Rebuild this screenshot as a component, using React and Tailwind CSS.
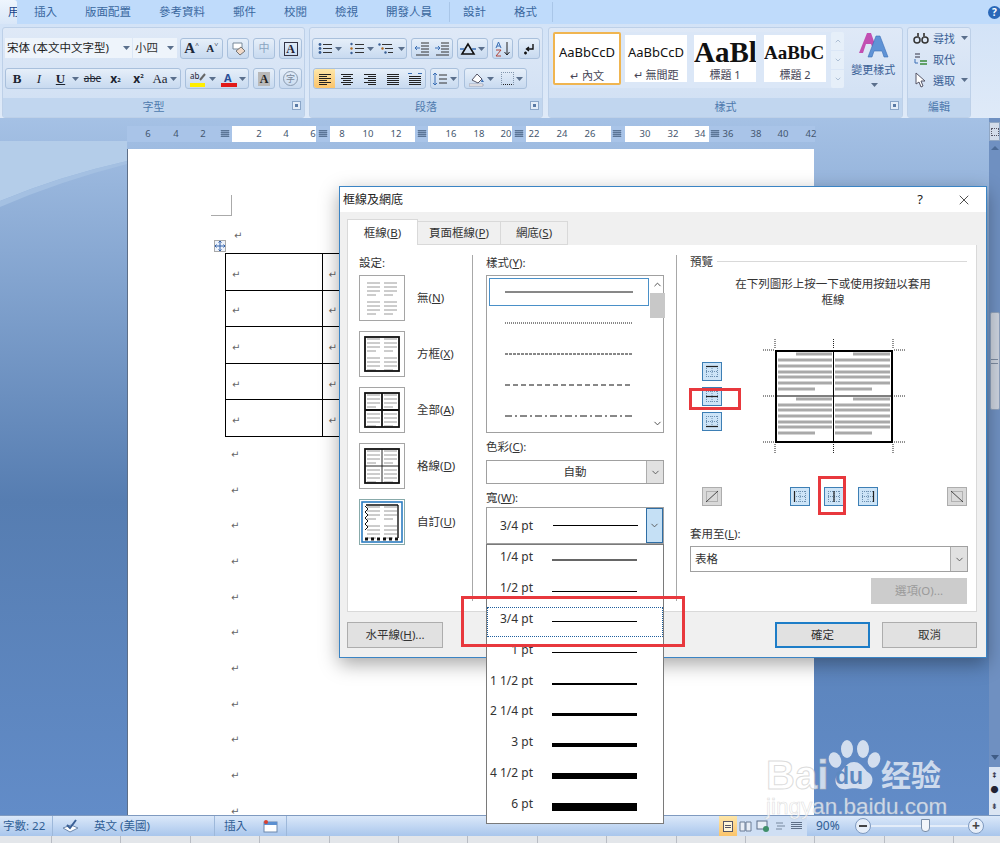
import React from "react";
import { ChevronDown, ChevronUp, X } from "lucide-react";

const Caret = () => (
  <svg className="w-[7px] h-[4px] ml-[2px] shrink-0" viewBox="0 0 7 4">
    <path d="M0 0h7L3.5 4z" fill="#5a6f8c" />
  </svg>
);

const Ico = ({ children, w = 16, h = 16 }) => (
  <svg width={w} height={h} viewBox={`0 0 ${w} ${h}`} className="shrink-0">
    {children}
  </svg>
);

const Lines = ({ rows, color = "#222", w = 16 }) => (
  <Ico w={w}>
    {rows.map(([a, b, y], i) => (
      <path key={i} d={`M${a} ${y + 0.5}H${b}`} stroke={color} />
    ))}
  </Ico>
);

const Cluster = ({ className, children }) => (
  <div className={`flex h-[21px] items-center rounded-[3px] border border-[#a9c0dc] bg-gradient-to-b from-[#e6eff9] to-[#c8daf0] ${className}`}>
    {children}
  </div>
);

const Cell = ({ className, children }) => (
  <div className={`flex h-full items-center justify-center ${className}`}>{children}</div>
);

const tabs = ["插入", "版面配置", "參考資料", "郵件", "校閱", "檢視", "開發人員"];

function Tabs() {
  return (
    <div className="flex h-[24px] items-center bg-[#bfdbfb] text-[11.5px] text-[#3a689f]">
      <div className="flex h-full w-[17px] items-center justify-end rounded-tr-[3px] bg-gradient-to-b from-[#eef5fd] to-[#d9e7f8] text-[#15428b]">
        <span className="w-[9px] overflow-hidden">用</span>
      </div>
      <div className="flex pl-[3px]">
        {tabs.map((t) => (
          <span key={t} className="px-[14px]">{t}</span>
        ))}
      </div>
      <div className="ml-[3px] h-[20px] w-px bg-[#a9c6e8]" />
      <span className="px-[13px]">設計</span>
      <span className="px-[15px]">格式</span>
      <div className="h-[20px] w-px bg-[#a9c6e8]" />
      <div className="ml-auto mr-[-1px] flex h-[13px] w-[13px] items-center justify-center rounded-full bg-[#2a68b8] text-[10px] font-bold text-white">?</div>
    </div>
  );
}

const Group = ({ className, title, launcher, children }) => (
  <div className={`flex h-[91px] shrink-0 flex-col overflow-hidden rounded-[3px] border border-[#bdd0e8] bg-gradient-to-b from-[#dfe9f7] to-[#cfdff3] ${className}`}>
    <div className="flex-1">{children}</div>
    <div className="relative flex h-[19px] items-center justify-center bg-[#c1d6ef] text-[11px] text-[#4d79ad]">
      {title}
      {launcher && (
        <div className="absolute right-[3px] top-[3px] flex h-[9px] w-[9px] items-center justify-center border border-[#8ba6c8] bg-[#e4edf8]">
          <div className="h-[3px] w-[3px] bg-[#5a7aa5]" />
        </div>
      )}
    </div>
  </div>
);

function FontGroup() {
  return (
    <Group className="ml-[2px] w-[303px]" title="字型" launcher>
      <div className="flex pl-[2px] pt-[10px]">
        <div className="flex h-[20px] w-[127px] items-center justify-between bg-[#eef4fb] px-[2px] text-[11.5px] text-[#222]">
          <span>宋体 (本文中文字型)</span>
          <Caret />
        </div>
        <div className="ml-px flex h-[20px] w-[44px] items-center justify-between bg-[#eef4fb] pl-[2px] pr-[3px] text-[11.5px] text-[#333]">
          <span>小四</span>
          <Caret />
        </div>
        <Cluster className="ml-[3px] w-[43px] font-['Liberation_Serif',serif] font-bold text-[#1d2a3c]">
          <Cell className="w-[22px] text-[15px]">A<sup className="text-[7px]">^</sup></Cell>
          <Cell className="w-[20px] text-[11px]">A<sup className="text-[7px]">˅</sup></Cell>
        </Cluster>
        <Cluster className="ml-[4px] w-[22px] justify-center">
          <Ico>
            <path d="M3 2h9v6H3z" fill="#fff" stroke="#789" />
            <path d="M6 10l5-4 4 4-5 4z" fill="#f0d9c8" stroke="#777" />
          </Ico>
        </Cluster>
        <Cluster className="ml-[4px] w-[22px] justify-center text-[11px] text-[#8aa4c0]">中</Cluster>
        <Cluster className="ml-[4px] w-[23px] justify-center">
          <div className="flex h-[14px] w-[14px] items-center justify-center border border-[#334] font-['Liberation_Serif',serif] text-[12px] font-bold text-[#223]">A</div>
        </Cluster>
      </div>
      <div className="flex pl-[2px] pt-[9px]">
        <Cluster className="w-[176px] text-[#1c2430]">
          <Cell className="w-[22px] font-['Liberation_Serif',serif] text-[13px] font-bold">B</Cell>
          <Cell className="w-[22px] font-['Liberation_Serif',serif] text-[13px] italic">I</Cell>
          <Cell className="w-[31px] pl-[4px] font-['Liberation_Serif',serif] text-[13px] font-bold">
            <span className="underline">U</span>
            <span className="ml-[5px]"><Caret /></span>
          </Cell>
          <Cell className="w-[23px] text-[10px] line-through">abe</Cell>
          <Cell className="w-[23px] text-[12px] font-bold">x<sub className="text-[6px]">2</sub></Cell>
          <Cell className="w-[23px] text-[12px] font-bold">x<sup className="text-[6px]">2</sup></Cell>
          <Cell className="w-[29px] font-['Liberation_Serif',serif] text-[13px]">Aa<Caret /></Cell>
        </Cluster>
        <Cluster className="ml-[4px] w-[64px]">
          <Cell className="w-[32px]">
            <Ico w={18}>
              <text x="1" y="8" fontSize="8" fill="#223">ab</text>
              <path d="M11 9l5-6" stroke="#666" strokeWidth="2" />
              <path d="M1 12h15v4H1z" fill="#ffee00" />
            </Ico>
            <Caret />
          </Cell>
          <Cell className="w-[30px]">
            <Ico>
              <text x="3" y="11" fontSize="11" fontWeight="700" fill="#2a4f96">A</text>
              <path d="M0 12h16v4H0z" fill="#e21a1a" />
            </Ico>
            <Caret />
          </Cell>
        </Cluster>
        <Cluster className="ml-[4px] w-[22px] justify-center">
          <div className="bg-[#b9b9b9] px-[2px] font-['Liberation_Serif',serif] text-[12px] font-bold leading-[14px] text-[#222]">A</div>
        </Cluster>
        <Cluster className="ml-[4px] w-[23px] justify-center">
          <div className="flex h-[15px] w-[15px] items-center justify-center rounded-full border border-[#8a9bb0] text-[9px] text-[#7a8a9c]">字</div>
        </Cluster>
      </div>
    </Group>
  );
}

const bullet = [[6, 15, 3], [6, 15, 7], [6, 15, 11]];
const left = [[2, 14, 3], [2, 10, 5], [2, 14, 7], [2, 10, 9], [2, 14, 11], [2, 10, 13]];
const center = [[2, 14, 3], [4, 12, 5], [2, 14, 7], [4, 12, 9], [2, 14, 11], [4, 12, 13]];
const right = [[2, 14, 3], [6, 14, 5], [2, 14, 7], [6, 14, 9], [2, 14, 11], [6, 14, 13]];
const just = [[2, 14, 3], [2, 14, 5], [2, 14, 7], [2, 14, 9], [2, 14, 11], [2, 14, 13]];

function ParaGroup() {
  return (
    <Group className="ml-[4px] w-[234px]" title="段落" launcher>
      <div className="flex pl-[2px] pt-[10px]">
        <Cluster className="w-[95px]">
          <Cell className="w-[32px]">
            <Ico>
              <circle cx="3" cy="3.5" r="1.4" fill="#3a5f95" />
              <circle cx="3" cy="7.5" r="1.4" fill="#3a5f95" />
              <circle cx="3" cy="11.5" r="1.4" fill="#3a5f95" />
              {bullet.map(([a, b, y]) => <path key={y} d={`M${a} ${y + 0.5}H${b}`} stroke="#333" />)}
            </Ico>
            <Caret />
          </Cell>
          <Cell className="w-[32px]">
            <Ico>
              <circle cx="2.500" cy="3" r="1.200" fill="#3a5f95" />
              <circle cx="2.500" cy="7.500" r="1.200" fill="#b06a20" />
              <circle cx="2.500" cy="12" r="1.200" fill="#3a5f95" />
              {bullet.map(([a, b, y]) => <path key={y} d={`M${a} ${y + 0.5}H${b}`} stroke="#333" />)}
            </Ico>
            <Caret />
          </Cell>
          <Cell className="w-[29px]">
            <Ico w={18}>
              <path d="M4 3.500h10M7 7.500h8M10 11.500h5" stroke="#333" />
              <circle cx="1.500" cy="3.500" r="1.200" fill="#3a5f95" />
              <circle cx="4.500" cy="7.500" r="1.200" fill="#b06a20" />
              <circle cx="7.500" cy="11.500" r="1.200" fill="#3a5f95" />
            </Ico>
            <Caret />
          </Cell>
        </Cluster>
        <Cluster className="ml-[4px] w-[42px]">
          <Cell className="w-[21px]">
            <Ico>
              <path d="M7 2h8M7 5h8M7 8h8M7 11h8M2 14h13" stroke="#333" />
              <path d="M6 7H1l2-2M1 7l2 2" stroke="#3a6fb5" fill="none" />
            </Ico>
          </Cell>
          <Cell className="w-[21px]">
            <Ico>
              <path d="M7 2h8M7 5h8M7 8h8M7 11h8M2 14h13" stroke="#333" />
              <path d="M1 7h5L4 5M6 7L4 9" stroke="#3a6fb5" fill="none" />
            </Ico>
          </Cell>
        </Cluster>
        <Cluster className="ml-[4px] w-[31px] justify-center">
          <Ico>
            <path d="M8 3L2 13h12z" fill="none" stroke="#111" strokeWidth="1.6" />
            <path d="M0 8h4M12 8h4" stroke="#3a6fb5" strokeWidth="1.5" />
          </Ico>
          <Caret />
        </Cluster>
        <Cluster className="ml-[4px] w-[21px] justify-center">
          <Ico>
            <path d="M1 7l2.500-6L6 7M2 5h3" stroke="#3a6fb5" fill="none" />
            <path d="M1 9h5l-5 6h5" stroke="#b0443a" fill="none" />
            <path d="M12 1v13M9.500 11l2.500 3 2.500-3" stroke="#222" fill="none" />
          </Ico>
        </Cluster>
        <Cluster className="ml-[5px] w-[22px] justify-center">
          <Ico>
            <path d="M12 3v5H6M8 6L5.500 8 8 10M3 12h3M4.500 10.500v3" stroke="#111" strokeWidth="1.4" fill="none" />
          </Ico>
        </Cluster>
      </div>
      <div className="flex pl-[3px] pt-[9px]">
        <Cluster className="w-[113px]">
          <Cell className="w-[21px] rounded-l-[3px] bg-gradient-to-b from-[#fde6a8] to-[#fbc46a]"><Lines rows={left} /></Cell>
          <Cell className="w-[23px]"><Lines rows={center} /></Cell>
          <Cell className="w-[23px]"><Lines rows={right} /></Cell>
          <Cell className="w-[23px]"><Lines rows={just} /></Cell>
          <Cell className="w-[21px]">
            <Ico>
              <path d="M1 2.500h4M11 2.500h4" stroke="#3a6fb5" />
              <path d="M2 5.500h12M2 7.500h12M2 9.500h12M2 11.500h12M2 13.500h12" stroke="#222" />
            </Ico>
          </Cell>
        </Cluster>
        <Cluster className="ml-[4px] w-[29px] justify-center">
          <Ico>
            <path d="M3 2v12M1 4l2-2 2 2M1 12l2 2 2-2" stroke="#3a6fb5" fill="none" />
            <path d="M7 4h8M7 8h8M7 12h8" stroke="#333" />
          </Ico>
          <Caret />
        </Cluster>
        <Cluster className="ml-[5px] w-[63px]">
          <Cell className="w-[34px]">
            <Ico>
              <path d="M3 9l5-6 5 5-4 4z" fill="#fff" stroke="#556" />
              <path d="M0 13h14v2H0z" fill="#fff" stroke="#889" strokeWidth=".6" />
              <path d="M13 8l2 3h-3z" fill="#3a6fb5" />
            </Ico>
            <Caret />
          </Cell>
          <Cell className="w-[28px]">
            <div className="h-[13px] w-[13px] border border-dotted border-[#8296ad] border-b-[#222]" />
            <Caret />
          </Cell>
        </Cluster>
      </div>
    </Group>
  );
}

const Style = ({ className, sample, label, active }) => (
  <div className={`flex shrink-0 flex-col items-center overflow-hidden bg-white ${active ? "h-[53px] w-[68px] rounded-[2px] border-2 border-[#f0b550] pt-[5px]" : "mt-[3px] h-[47px] w-[62px] pt-[4px]"}`}>
    <div className={`w-full overflow-hidden whitespace-nowrap text-center text-[#111] ${active ? "h-[29px]" : "h-[27px]"} ${className}`}>{sample}</div>
    <div className="mt-[2px] text-[11px] leading-[14px] text-[#445]">{label}</div>
  </div>
);

function StylesGroup() {
  return (
    <Group className="ml-[5px] w-[355px]" title="樣式" launcher>
      <div className="flex pl-[3px] pt-[4px]">
        <div className="flex h-[56px] w-[294px] rounded-[2px] bg-[#dbe7f7]">
          <div className="ml-[1px] flex">
            <Style active className="text-[13px] leading-[27px]" sample="AaBbCcD" label="↵ 內文" />
            <div className="w-[4px]" />
            <Style className="text-[13px] leading-[27px]" sample="AaBbCcD" label="↵ 無間距" />
            <div className="w-[7px]" />
            <Style className="text-left font-['Liberation_Serif',serif] text-[29px] font-bold leading-[27px]" sample="AaBl" label="標題 1" />
            <div className="w-[8px]" />
            <Style className="text-left font-['Liberation_Serif',serif] text-[19px] font-bold leading-[27px]" sample="AaBbC" label="標題 2" />
          </div>
          <div className="ml-[5px] flex w-[13px] flex-col gap-px text-[#8fa6c2]">
            <Cell className="flex-1 rounded-t-[2px] bg-[#e6eff9]"><ChevronUp size={8} /></Cell>
            <Cell className="flex-1 bg-[#e6eff9]"><ChevronDown size={8} /></Cell>
            <Cell className="flex-1 rounded-b-[2px] bg-[#e6eff9]"><ChevronDown size={8} /></Cell>
          </div>
        </div>
        <div className="flex w-[58px] flex-col items-center">
          <svg width="32" height="28" viewBox="0 0 32 28" className="mt-[-1px]">
            <path d="M2 22L10 2h4l5 14-3 2-2-5H9l-3 9z" fill="#c24fb2" />
            <path d="M11 26L19 5h4l8 21h-4l-2-6h-8l-2 6z" fill="#5f93d6" stroke="#3a6fb5" strokeWidth=".6" />
          </svg>
          <div className="mt-[4px] text-[11px] leading-[14px] text-[#3a5f95]">變更樣式</div>
          <div className="mt-[6px]"><Caret /></div>
        </div>
      </div>
    </Group>
  );
}

function EditGroup() {
  return (
    <Group className="ml-[4px] w-[64px]" title="編輯">
      <div className="flex flex-col gap-[5px] pl-[5px] pt-[2px] text-[11px] leading-[15px] text-[#3a5f95]">
        <div className="flex items-center gap-[4px]">
          <Ico>
            <circle cx="4" cy="10" r="3" fill="none" stroke="#333" strokeWidth="1.5" />
            <circle cx="12" cy="10" r="3" fill="none" stroke="#333" strokeWidth="1.5" />
            <path d="M4 3h2v5H4zM10 3h2v5h-2z" fill="#555" />
          </Ico>
          <span>尋找</span><Caret />
        </div>
        <div className="flex items-center gap-[4px]">
          <Ico>
            <path d="M2 3h5M2 6h5" stroke="#334" />
            <path d="M7 10h7M7 13h7" stroke="#3a8a3a" strokeWidth="1.500" />
            <path d="M2 8v4h3" stroke="#3a6fb5" fill="none" />
          </Ico>
          <span>取代</span>
        </div>
        <div className="flex items-center gap-[4px]">
          <Ico>
            <path d="M3 1v11l3-2 2 5 2-1-2-5h4z" fill="#fff" stroke="#556" />
          </Ico>
          <span>選取</span><Caret />
        </div>
      </div>
    </Group>
  );
}

const ticks = [
  [148, "6"], [176, "4"], [203, "2"], [259, "2"], [286, "4"], [313, "6"], [342, "8"], [368, "10"], [396, "12"],
  [451, "16"], [479, "18"], [506, "20"], [534, "22"], [562, "24"], [590, "26"], [645, "30"], [673, "32"], [700, "34"],
  [728, "36"], [756, "38"], [783, "40"], [811, "42"],
];
const rulerCells = [225, 323, 422, 519, 617, 715];

function Ruler() {
  return (
    <div className="relative ml-[127px] mt-[8px] flex h-[16px] w-[688px] text-[9.5px] leading-[16px] text-[#44566e]">
      <div className="w-[105px] bg-[#a9c4e8]" />
      <div className="w-[84px] bg-white" />
      <div className="w-[14px] bg-[#a9c4e8]" />
      <div className="w-[85px] bg-white" />
      <div className="w-[13px] bg-[#a9c4e8]" />
      <div className="w-[84px] bg-white" />
      <div className="w-[14px] bg-[#a9c4e8]" />
      <div className="w-[85px] bg-white" />
      <div className="w-[14px] bg-[#a9c4e8]" />
      <div className="w-[84px] bg-white" />
      <div className="flex-1 bg-[#a9c4e8]" />
      {ticks.map(([x, t]) => (
        <span key={x} className="absolute top-0 -translate-x-1/2" style={{ left: x - 127 }}>{t}</span>
      ))}
      {rulerCells.map((x) => (
        <svg key={x} width="9" height="8" viewBox="0 0 9 8" className="absolute top-[4px] -translate-x-1/2" style={{ left: x - 127 }}>
          <path d="M0 .5h9M0 2.500h9M0 4.500h9M0 6.500h9M1.500 0v7M3.500 0v7M5.500 0v7M7.500 0v7" stroke="#51698a" strokeWidth=".8" />
        </svg>
      ))}
    </div>
  );
}

const Mark = () => <span className="font-['DejaVu_Sans',sans-serif] text-[10px] leading-none text-[#666]">↵</span>;

function Page() {
  return (
    <div className="relative ml-[127px] mt-[7px] h-[666px] w-[687px] overflow-hidden border-l border-[#5c6e88] bg-white">
      <div className="ml-[83px] mt-[46px] h-[21px] w-[21px] border-b border-r border-[#aaa]" />
      <div className="ml-[106px] mt-[12px] flex h-[16px] items-center"><Mark /></div>
      <div className="absolute left-[86px] top-[91px] flex h-[12px] w-[12px] items-center justify-center border border-[#a9a9a9] bg-[#eef3fb]">
        <svg width="10" height="10" viewBox="0 0 10 10"><path d="M5 0v10M0 5h10M3.500 1.500L5 0l1.500 1.500M3.500 8.500L5 10l1.500-1.500M1.500 3.500L0 5l1.500 1.500M8.500 3.500L10 5 8.500 6.500" stroke="#2f5fa8" fill="none" /></svg>
      </div>
      <table className="ml-[97px] mt-[9px] w-[194px] table-fixed border-collapse">
        <tbody>
          {[0, 1, 2, 3, 4].map((r) => (
            <tr key={r} className="h-[36.600px]">
              <td className="border border-black pl-[6px] leading-none"><Mark /></td>
              <td className="border border-black pl-[6px] leading-none"><Mark /></td>
            </tr>
          ))}
        </tbody>
      </table>
      {[0, 1, 2, 3, 4, 5, 6, 7, 8, 9, 10].map((i) => (
        <div key={i} className="ml-[103px] flex h-[35.700px] items-center"><Mark /></div>
      ))}
    </div>
  );
}

function Scrollbar() {
  return (
    <div className="flex w-[11px] shrink-0 flex-col items-center bg-[#6f90c1]">
      <div className="mt-[4px] flex h-[19px] w-[11px] items-center justify-center border border-[#8fa6c4] bg-[#d3dcea]">
        <div className="h-[8px] w-[8px] border border-dotted border-[#556]" />
      </div>
      <div className="mt-[5px] border-x-[4px] border-b-[4px] border-x-transparent border-b-[#4b6a96]" />
      <div className="mt-[162px] flex h-[98px] w-[10px] items-center justify-center rounded-[2px] border border-[#8fa2bd] bg-[#ccd3de]">
        <div className="h-[5px] w-[7px] border-y border-[#7d8ba0]" />
      </div>
      <div className="mt-[345px] border-x-[4px] border-t-[5px] border-x-transparent border-t-[#3f5c86]" />
      <div className="mt-auto flex h-[48px] w-[11px] flex-col items-center justify-around bg-[#dbe5f3] pb-[1px] text-[8px] leading-none text-[#223]">
        <span>⇞</span>
        <span>●</span>
        <span>⇟</span>
      </div>
    </div>
  );
}

const Dots = ({ d }) => <path d={d} stroke="#222" strokeDasharray="1 1" />;

function Preview() {
  const rowsTop = [355, 361, 367, 373, 378, 384, 390];
  const rowsBot = [400, 406, 411, 417, 423, 428, 434];
  const Txt = ({ rows, x1, x2, x3, x4 }) =>
    rows.map((y, i) => (
      <path
        key={y}
        d={`M${i === 0 ? x3 : x1} ${y}H${i === rows.length - 1 ? x4 : x2}`}
        stroke="#a9a9a9"
        strokeWidth="3"
      />
    ));
  return (
    <svg width="150" height="120" viewBox="760 338 150 120" className="shrink-0">
      <Txt rows={rowsTop} x1={778} x2={832} x3={796} x4={815} />
      <Txt rows={rowsBot} x1={778} x2={832} x3={796} x4={815} />
      <Txt rows={rowsTop} x1={835} x2={890} x3={853} x4={872} />
      <Txt rows={rowsBot} x1={835} x2={890} x3={853} x4={872} />
      <rect x="776" y="352" width="116" height="91" fill="none" stroke="#000" strokeWidth="2" />
      <path d="M833.500 352v91M776 397h116" stroke="#000" />
      <Dots d="M775 340v10M833.500 340v10M893 340v10M775 445v10M833.500 445v10M893 445v10M763 351h12M763 397h12M763 443h12M894 351h12M894 397h12M894 443h12" />
    </svg>
  );
}

const BorderBtn = ({ d, gray }) => (
  <div className={`h-[19px] w-[20px] shrink-0 border ${gray ? "border-[#adadad] bg-[#d9d9d9]" : "border-[#3d7fb5] bg-[#cde4f7]"}`}>
    <svg width="18" height="17" viewBox="0 0 18 17">
      {!gray && <path d="M3.500 3v11M9 3v11M14.500 3v11M3 3.500h12M3 8.500h12M3 13.500h12" stroke="#6b8fb0" strokeDasharray="1 1" />}
      {gray && <rect x="3.500" y="3.500" width="11" height="10" fill="none" stroke="#888" strokeDasharray="1 1" />}
      <path d={d} stroke="#222" strokeWidth={gray ? 0.8 : 1.2} fill="none" />
    </svg>
  </div>
);

const thumbTxt = "M8 8h13M8 12h13M8 16h13M8 20h9M25 8h13M25 12h13M25 16h13M25 20h9M8 27h13M8 31h13M8 35h13M8 39h9M25 27h13M25 31h13M25 35h13M25 39h9";

const SettingIcon = ({ border, extra, selected }) => (
  <div className={`h-[46px] w-[46px] shrink-0 border bg-white ${selected ? "border-[#8aa]" : "border-[#a5a5a5]"}`}>
    <svg width="44" height="44" viewBox="1 1 44 44">
      <path d={thumbTxt} stroke="#9a9a9a" />
      {border && <rect x="6" y="6" width="34" height="34" fill="none" stroke="#111" strokeWidth="1.8" />}
      {extra}
    </svg>
  </div>
);

const settings = [
  ["無", "N", <SettingIcon key="a" />],
  ["方框", "X", <SettingIcon key="b" border />],
  ["全部", "A", <SettingIcon key="c" border extra={<path d="M23 6v34M6 23h34" stroke="#111" strokeWidth="1.8" />} />],
  ["格線", "D", <SettingIcon key="d" border extra={<path d="M23 6v34M6 23h34" stroke="#111" strokeWidth=".9" />} />],
  ["自訂", "U", (
    <SettingIcon key="e" selected extra={
      <g fill="none">
        <rect x="3" y="3" width="40" height="40" stroke="#2b7cc1" strokeWidth="1.6" />
        <path d="M7 6h32M39 6v33" stroke="#111" strokeWidth="1.4" />
        <path d="M6 7l3 3-3 3 3 3-3 3 3 3-3 3 3 3-3 3" stroke="#111" />
        <path d="M6 40h34" stroke="#111" strokeWidth="3" strokeDasharray="3 3" />
      </g>
    } />
  )],
];

const styleRows = ["", "1 1", "3 1", "5 3", "7 3 2 3"];
const widths = [
  ["1/4 pt", "h-[2px] bg-[#666]"],
  ["1/2 pt", "h-px bg-black"],
  ["3/4 pt", "h-px bg-black"],
  ["1 pt", "h-px bg-black"],
  ["1 1/2 pt", "h-[2px] bg-black"],
  ["2 1/4 pt", "h-[3px] bg-black"],
  ["3 pt", "h-[4px] bg-black"],
  ["4 1/2 pt", "h-[6px] bg-black"],
  ["6 pt", "h-[8px] bg-black"],
];

const Ul = ({ children }) => <span className="underline">{children}</span>;

const ComboBtn = ({ active }) => (
  <div className={`ml-auto flex h-full w-[17px] items-center justify-center ${active ? "border border-[#2f6ea5] bg-[#c5e0f5]" : "border-l border-[#adadad] bg-[#e1e1e1]"} text-[#555]`}>
    <ChevronDown size={11} />
  </div>
);

function Dialog() {
  return (
    <div className="absolute left-[339px] top-[186px] flex h-[472px] w-[648px] flex-col border border-[#3b84c4] bg-[#f0f0f0] text-[11.5px] text-[#333] shadow-[0_6px_18px_rgba(0,0,0,0.35)]">
      <div className="flex h-[25px] items-center bg-white pl-[3px] pr-[14px] text-[12px] text-[#222]">
        <span>框線及網底</span>
        <span className="ml-auto mr-[33px] text-[13px]">?</span>
        <X size={16} strokeWidth={1.2} />
      </div>
      <div className="flex h-[33px] items-end pl-[7px]">
        <div className="flex h-[26px] w-[71px] items-center justify-center border border-b-0 border-[#d9d9d9] bg-white">框線(<Ul>B</Ul>)</div>
        <div className="flex h-[24px] w-[83px] items-center justify-center border-y border-r border-[#d9d9d9] bg-[#f0f0f0]">頁面框線(<Ul>P</Ul>)</div>
        <div className="flex h-[24px] w-[67px] items-center justify-center border-y border-r border-[#d9d9d9] bg-[#f0f0f0]">網底(<Ul>S</Ul>)</div>
      </div>
      <div className="ml-[7px] mr-[9px] flex h-[367px] border border-t-0 border-[#d9d9d9] bg-white">
        <div className="w-[124px] shrink-0 pl-[11px] pt-[10px]">
          <div className="h-[20px] leading-[16px]">設定:</div>
          <div className="flex flex-col gap-[10px]">
            {settings.map(([label, k, icon]) => (
              <div key={k} className="flex items-center gap-[12px]">
                {icon}
                <span>{label}(<Ul>{k}</Ul>)</span>
              </div>
            ))}
          </div>
        </div>
        <div className="my-[10px] w-px bg-[#a8a8a8]" />
        <div className="w-[203px] shrink-0 pl-[13px] pt-[10px]">
          <div className="h-[20px] leading-[16px]">樣式(<Ul>Y</Ul>):</div>
          <div className="flex h-[158px] w-[178px] border border-[#a0a0a0]">
            <div className="flex-1 pl-[2px] pr-px pt-[2px]">
              {styleRows.map((dash, i) => (
                <div key={i} className={`mb-[3px] flex h-[28px] items-center px-[15px] ${i === 0 ? "border border-[#4a90c8]" : "border border-transparent"}`}>
                  <svg width="128" height="2" viewBox="0 0 128 2">
                    <path d="M0 1h128" stroke="#111" strokeDasharray={dash} />
                  </svg>
                </div>
              ))}
            </div>
            <div className="flex w-[16px] flex-col items-center text-[#444]">
              <ChevronUp size={11} className="mt-[3px]" />
              <div className="mt-[3px] h-[25px] w-[15px] bg-[#c8c8c8]" />
              <ChevronDown size={11} className="mb-[3px] mt-auto" />
            </div>
          </div>
          <div className="mt-[6px] h-[21px] leading-[16px]">色彩(<Ul>C</Ul>):</div>
          <div className="flex h-[24px] w-[178px] border border-[#a0a0a0]">
            <span className="flex-1 self-center pl-[17px] text-center">自動</span>
            <ComboBtn />
          </div>
          <div className="mt-[6px] h-[17px] leading-[16px]">寬(<Ul>W</Ul>):</div>
          <div className="flex h-[37px] w-[178px] items-center border border-[#a0a0a0]">
            <span className="w-[46px] text-right font-['Noto_Sans',sans-serif] text-[12px]">3/4 pt</span>
            <div className="ml-[20px] h-px w-[85px] bg-black" />
            <ComboBtn active />
          </div>
        </div>
        <div className="my-[10px] w-px bg-[#a8a8a8]" />
        <div className="flex-1 pl-[13px] pt-[9px]">
          <div className="flex h-[15px] items-center gap-[4px] pr-[9px]">
            <span>預覽</span>
            <div className="h-px flex-1 bg-[#d9d9d9]" />
          </div>
          <div className="mt-[7px] text-center leading-[16px]">
            在下列圖形上按一下或使用按鈕以套用
            <br />
            框線
          </div>
          <div className="mt-[29px] flex h-[120px] items-center">
            <div className="ml-[12px] flex w-[20px] flex-col gap-[6px] pb-[2px]">
              <BorderBtn d="M3 3.500h12" />
              <BorderBtn d="M3 8.500h12" />
              <BorderBtn d="M3 13.500h12" />
            </div>
            <div className="ml-[38px]"><Preview /></div>
          </div>
          <div className="mt-[30px] flex">
            <div className="ml-[12px]"><BorderBtn gray d="M3 14L15 3" /></div>
            <div className="ml-[68px]"><BorderBtn d="M3.500 3v11" /></div>
            <div className="ml-[14px]"><BorderBtn d="M9 3v11" /></div>
            <div className="ml-[14px]"><BorderBtn d="M14.500 3v11" /></div>
            <div className="ml-[69px]"><BorderBtn gray d="M3 3l12 11" /></div>
          </div>
          <div className="mt-[20px] h-[20px] leading-[16px]">套用至(<Ul>L</Ul>):</div>
          <div className="flex h-[26px] w-[278px] items-center border border-[#a0a0a0] pl-[4px]">
            <span>表格</span>
            <ComboBtn />
          </div>
          <div className="ml-[181px] mt-[6px] flex h-[26px] w-[96px] items-center justify-center bg-[#cccccc] text-[#9a9a9a]">選項(O)...</div>
        </div>
      </div>
      <div className="mt-[10px] flex pl-[7px] pr-[9px]">
        <div className="flex h-[26px] w-[96px] items-center justify-center border border-[#adadad] bg-[#e1e1e1]">水平線(<Ul>H</Ul>)...</div>
        <div className="ml-auto flex h-[26px] w-[95px] items-center justify-center border-2 border-[#1d7dc7] bg-[#e1e1e1]">確定</div>
        <div className="ml-[12px] flex h-[26px] w-[95px] items-center justify-center border border-[#adadad] bg-[#e1e1e1]">取消</div>
      </div>
    </div>
  );
}

function WidthMenu() {
  return (
    <div className="absolute left-[486px] top-[544px] w-[178px] border border-[#7a7a7a] bg-white pb-px font-['Noto_Sans',sans-serif] text-[12px] text-[#333]">
      {widths.map(([label, line], i) => (
        <div key={label} className={`flex h-[30.800px] items-center ${i === 2 ? "border border-dotted border-[#1f5f9e]" : ""}`}>
          <span className={`w-[46px] pb-[6px] text-right ${i === 2 ? "-ml-px" : ""}`}>{label}</span>
          <div className={`ml-[19px] w-[85px] ${line}`} />
        </div>
      ))}
    </div>
  );
}

function Watermark() {
  return (
    <div className="absolute left-[766px] top-[735px] h-[85px] w-[182px] text-white/70">
      <span className="absolute left-0 top-[20px] font-['Liberation_Sans',sans-serif] text-[40px] font-bold leading-none [-webkit-text-stroke:1px_rgba(190,190,190,0.55)]">Bai</span>
      <svg width="60" height="62" viewBox="0 0 60 62" className="absolute left-[60px] top-0">
        <g fill="rgba(255,255,255,.72)">
          <ellipse cx="21" cy="14" rx="6" ry="9" />
          <ellipse cx="37" cy="14" rx="6" ry="9" />
          <ellipse cx="9" cy="25" rx="6" ry="8" transform="rotate(-20 9 25)" />
          <ellipse cx="48" cy="25" rx="6" ry="8" transform="rotate(20 48 25)" />
          <path d="M28 27c8 0 9 7 15 11 7 5 3 18-8 16-4-1-10-1-14 0-11 2-15-10-8-16 6-4 7-11 15-11z" />
        </g>
      </svg>
      <span className="absolute left-[69px] top-[30px] font-['Liberation_Sans',sans-serif] text-[23px] font-bold leading-none text-[#5d88c0]">du</span>
      <span className="absolute left-[115px] top-[23px] font-['Noto_Sans_CJK_SC',sans-serif] text-[30px] font-bold leading-none">经验</span>
      <span className="absolute left-0 top-[60px] font-['Liberation_Sans',sans-serif] text-[22.500px] leading-[24px] [-webkit-text-stroke:0.6px_rgba(190,190,190,0.5)]">jingyan.baidu.com</span>
    </div>
  );
}

function StatusBar() {
  return (
    <div className="flex h-[21px] items-center border-t border-[#7f9ac0] bg-gradient-to-b from-[#dbe8f9] to-[#a9c6ec] text-[11.5px] text-[#2f5d94]">
      <span className="w-[52px] pl-[3px]">字數: 22</span>
      <div className="h-full w-px bg-[#9db8da]" />
      <svg width="17" height="15" viewBox="0 0 17 15" className="ml-[9px] shrink-0">
        <path d="M1 9l7 4 8-4-7-3z" fill="#fff" stroke="#6d88ad" />
        <path d="M5 6l3 3 6-8" fill="none" stroke="#3a5f95" strokeWidth="2" />
      </svg>
      <span className="ml-[15px] w-[120px]">英文 (美國)</span>
      <div className="h-full w-px bg-[#9db8da]" />
      <span className="ml-[9px]">插入</span>
      <svg width="15" height="13" viewBox="0 0 15 13" className="ml-[16px]">
        <rect x="1" y="2" width="13" height="10" fill="#fff" stroke="#6d88ad" />
        <path d="M1 2h13v3H1z" fill="#5b8fd0" />
        <circle cx="3" cy="2" r="2" fill="#d9402f" />
      </svg>
      <div className="ml-[8px] h-full w-px bg-[#9db8da]" />
      <div className="ml-[432px] flex h-full w-[88px] items-center bg-[#cfdff4]">
        <Cell className="w-[18px] bg-gradient-to-b from-[#fde6a8] to-[#fbc46a]">
          <div className="flex h-[11px] w-[10px] flex-col justify-center gap-px border border-[#556] bg-[#fff6d8] px-px">
            <div className="h-px bg-[#556]" />
            <div className="h-px bg-[#556]" />
          </div>
        </Cell>
        <Cell className="w-[17px]">
          <svg width="13" height="11" viewBox="0 0 13 11"><path d="M1 1h5v9H1zM7 1h5v9H7z" fill="#e8eef7" stroke="#6b7d96" /></svg>
        </Cell>
        <Cell className="w-[17px]">
          <svg width="13" height="12" viewBox="0 0 13 12"><rect x="1" y="1" width="10" height="8" fill="#e8eef7" stroke="#5c6f8a" /><circle cx="10" cy="9" r="3" fill="#3f8f6a" /></svg>
        </Cell>
        <Cell className="w-[17px]">
          <svg width="12" height="11" viewBox="0 0 12 11"><path d="M2 2h7M3 5h8M2 8h6" stroke="#77889e" /></svg>
        </Cell>
        <Cell className="w-[17px]">
          <svg width="11" height="10" viewBox="0 0 11 10"><path d="M0 1.500h11M0 3.500h11M0 5.500h11M0 7.500h11" stroke="#5f7088" /></svg>
        </Cell>
      </div>
      <span className="ml-[9px] w-[30px] text-[12px]">90%</span>
      <div className="ml-[9px] flex h-[16px] w-[16px] items-center justify-center rounded-full border border-[#7f9ac0] bg-[#e6eef9]">
        <div className="h-[2px] w-[8px] bg-[#444]" />
      </div>
      <div className="relative h-[2px] w-[97px] bg-[#e4edf9]">
        <div className="absolute left-[50px] top-[-6px] h-[13px] w-[9px] rounded-b-[4px] border border-[#7a8ea8] bg-[#f2f5fa]" />
      </div>
      <div className="flex h-[16px] w-[16px] items-center justify-center rounded-full border border-[#7f9ac0] bg-[#e6eef9] text-[14px] font-bold leading-none text-[#444]">+</div>
    </div>
  );
}

export default function App() {
  return (
    <div className="relative h-[843px] w-[1000px] overflow-hidden font-['Noto_Sans','Noto_Sans_CJK_TC',sans-serif]">
      <Tabs />
      <div className="flex h-[94px] bg-gradient-to-b from-[#d3e3f7] to-[#dfeaf8] pt-[3px]">
        <FontGroup />
        <ParaGroup />
        <StylesGroup />
        <EditGroup />
      </div>
      <div className="relative flex h-[697px] bg-gradient-to-b from-[#a5c1e5] via-[#567db1] via-55% to-[#628cc8]">
        <svg width="127" height="70" viewBox="0 0 127 70" className="absolute left-0 top-[23px]">
          <path d="M0 0H127V20Q60 35 0 60z" fill="#b4cde9" />
          <path d="M0 60Q60 35 127 20V23Q60 40 0 66z" fill="#a4c0e2" />
        </svg>
        <div className="relative w-[989px] shrink-0">
          <Ruler />
          <Page />
        </div>
        <Scrollbar />
      </div>
      <StatusBar />
      <div className="flex h-[7px] bg-[#e3e6ea]">
        <div className="w-[52px] border-r border-[#b8bcc4]" />
        {[0, 1, 2, 3, 4, 5, 6, 7, 8, 9, 10, 11, 12].map((i) => (
          <div key={i} className="w-[69.400px] border-r border-[#b8bcc4]" />
        ))}
      </div>
      <Dialog />
      <WidthMenu />
      <Watermark />
      <div className="absolute left-[461px] top-[596px] h-[51px] w-[224px] border-[3px] border-[#e8383d]" />
      <div className="absolute left-[689px] top-[388px] h-[22px] w-[52px] border-[3px] border-[#e8383d]" />
      <div className="absolute left-[818px] top-[476px] h-[39px] w-[28px] border-[3px] border-[#e8383d]" />
    </div>
  );
}
